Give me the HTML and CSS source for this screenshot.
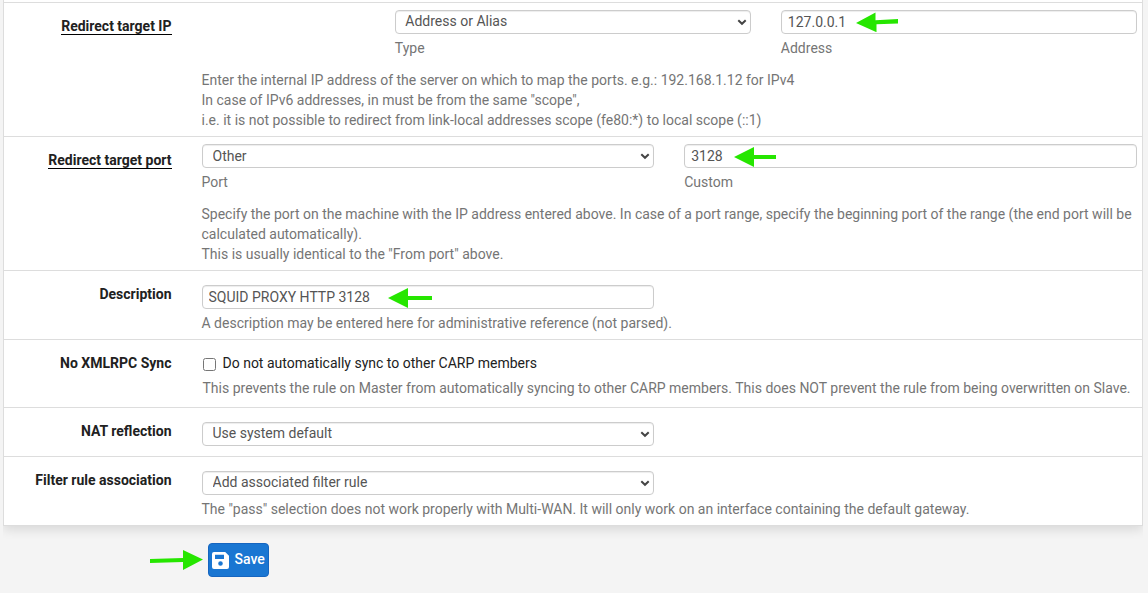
FILE: index.html
```html
<!DOCTYPE html>
<html lang="en">
<head>
<meta charset="utf-8">
<title>Port Forward</title>
<link rel="stylesheet" href="styles.css">
</head>
<body>
<form class="panel">
  <div class="row row-tall">
    <div class="label"><span class="required">Redirect target IP</span></div>
    <div class="content">
      <div class="fields fields-offset">
        <div class="field">
          <div class="select-wrap"><select class="control select"><option>Address or Alias</option></select><svg class="chevron" viewBox="0 0 10 7"><path d="M1.3 1.2 5 4.8 8.7 1.2"/></svg></div>
          <div class="help">Type</div>
        </div>
        <div class="field">
          <input class="control" type="text" value="127.0.0.1">
          <svg class="arrow arrow-address" viewBox="0 0 44 20"><path d="M2 11 21.5 .5v7.7L44 7v4.4l-21.5.8v8z"/></svg>
          <div class="help">Address</div>
        </div>
      </div>
      <div class="help notes">Enter the internal IP address of the server on which to map the ports. e.g.: 192.168.1.12 for IPv4<br>In case of IPv6 addresses, in must be from the same "scope",<br>i.e. it is not possible to redirect from link-local addresses scope (fe80:*) to local scope (::1)</div>
    </div>
  </div>
  <div class="row row-tall">
    <div class="label"><span class="required">Redirect target port</span></div>
    <div class="content">
      <div class="fields">
        <div class="field">
          <div class="select-wrap"><select class="control select select-centered"><option>Other</option></select><svg class="chevron" viewBox="0 0 10 7"><path d="M1.3 1.2 5 4.8 8.7 1.2"/></svg></div>
          <div class="help">Port</div>
        </div>
        <div class="field">
          <input class="control" type="text" value="3128">
          <svg class="arrow arrow-port" viewBox="0 0 42 20"><path d="M0 10 20 0v8h22v4H20v8z"/></svg>
          <div class="help">Custom</div>
        </div>
      </div>
      <div class="help notes">Specify the port on the machine with the IP address entered above. In case of a port range, specify the beginning port of the range (the end port will be calculated automatically).<br>This is usually identical to the "From port" above.</div>
    </div>
  </div>
  <div class="row">
    <div class="label">Description</div>
    <div class="content">
      <div class="fields">
        <div class="field">
          <input class="control" type="text" value="SQUID PROXY HTTP 3128">
          <svg class="arrow arrow-description" viewBox="0 0 44 20"><path d="M0 10 20 0v8h24v4H20v8z"/></svg>
        </div>
      </div>
      <div class="help">A description may be entered here for administrative reference (not parsed).</div>
    </div>
  </div>
  <div class="row row-check">
    <div class="label">No XMLRPC Sync</div>
    <div class="content">
      <label class="check"><input class="checkbox" type="checkbox">Do not automatically sync to other CARP members</label>
      <div class="help">This prevents the rule on Master from automatically syncing to other CARP members. This does NOT prevent the rule from being overwritten on Slave.</div>
    </div>
  </div>
  <div class="row row-plain">
    <div class="label">NAT reflection</div>
    <div class="content">
      <div class="fields">
        <div class="select-wrap"><select class="control select"><option>Use system default</option></select><svg class="chevron" viewBox="0 0 10 7"><path d="M1.3 1.2 5 4.8 8.7 1.2"/></svg></div>
      </div>
    </div>
  </div>
  <div class="row">
    <div class="label">Filter rule association</div>
    <div class="content">
      <div class="fields">
        <div class="select-wrap"><select class="control select"><option>Add associated filter rule</option></select><svg class="chevron" viewBox="0 0 10 7"><path d="M1.3 1.2 5 4.8 8.7 1.2"/></svg></div>
      </div>
      <div class="help">The "pass" selection does not work properly with Multi-WAN. It will only work on an interface containing the default gateway.</div>
    </div>
  </div>
</form>
<div class="actions">
  <svg class="save-arrow" viewBox="0 0 53 20"><path d="M0 9 33 8V0l20 9.500-20 10.500v-8L0 13z"/></svg>
  <button class="save" type="button">
    <svg class="save-icon" viewBox="0 0 17 17"><path fill-rule="evenodd" d="M2 0h11.200L17 3.800V15a2 2 0 0 1-2 2H2a2 2 0 0 1-2-2V2a2 2 0 0 1 2-2zM3 2.800V7h9V2.800zM8.500 9.200a2.300 2.300 0 1 0 0 4.600 2.300 2.300 0 0 0 0-4.600z"/></svg>
    <span class="save-text">Save</span>
  </button>
</div>
</body>
</html>
```
FILE: styles.css
```css
* { box-sizing: border-box; }

body {
  margin: 0;
  height: 593px;
  overflow: hidden;
  background: #f4f4f4;
  color: #212121;
  font: 14px/20px Roboto, sans-serif;
}

.panel {
  margin: 0 5px 0 3px;
  padding-top: 2px;
  height: 526px;
  background: #fff;
  border: 1px solid #ddd;
  border-top: 0;
  box-shadow: 0 4px 10px rgba(0, 0, 0, .11);
  clip-path: inset(0 0 -20px 0);
}

.row {
  display: grid;
  grid-template-columns: 167.5px 935.4px;
  column-gap: 30px;
  padding-bottom: 6px;
  border-top: 1px solid #ddd;
}

.label {
  padding-top: 13px;
  text-align: right;
  font-weight: 700;
  white-space: nowrap;
}

.required {
  display: inline-block;
  height: 19px;
  border-bottom: 1px solid #000;
}

.content { padding-top: 14px; }
.row-tall .content { padding-top: 7px; }
.row-plain { padding-bottom: 10px; }

.fields {
  display: grid;
  grid-template-columns: 1fr 1fr;
  column-gap: 30px;
}

.fields-offset { padding-left: 193.3px; }
.field, .select-wrap { position: relative; }

.control {
  display: block;
  width: 100%;
  height: 24px;
  margin: 0;
  padding: 0 6px;
  border: 1px solid #ccc;
  border-radius: 4px;
  background: #fff;
  box-shadow: inset 0 1px 1px rgba(0, 0, 0, .075);
  color: #555;
  font: inherit;
}

.select {
  appearance: none;
  padding: 0 24px 2px 10px;
}

.fields-offset .select { padding-left: 9.500px; }
.select-centered { padding-bottom: 0; }

.chevron {
  position: absolute;
  top: 9px;
  right: 4px;
  width: 10px;
  height: 7px;
  fill: none;
  stroke: #444;
  stroke-width: 2;
}

.help {
  padding-top: 4px;
  color: #757575;
}

.notes { padding-top: 12px; }

.check {
  display: flex;
  align-items: center;
}

.row-check .content { padding: 13px 0 3px 1px; }

.checkbox {
  width: 13px;
  height: 13px;
  margin: 2px 7px 0 0;
}

.row-check .help { padding-top: 5px; white-space: nowrap; }

.arrow {
  position: absolute;
  height: 20px;
  fill: #26e600;
}

.arrow-address { left: 73px; top: 2px; width: 44px; }
.arrow-port { left: 50px; top: 3px; width: 42px; }
.arrow-description { left: 186.500px; top: 3px; width: 44px; }

.actions {
  display: flex;
  align-items: center;
  gap: 5px;
  padding: 17px 0 0 150px;
}

.save-arrow {
  width: 53px;
  height: 20px;
  fill: #26e600;
}

.save {
  display: flex;
  align-items: center;
  gap: 5.500px;
  width: 61px;
  height: 34px;
  padding: 0 3px;
  border: 1px solid #1565c0;
  border-radius: 4px;
  background: #1976d2;
  color: #fff;
  font: 500 14px/20px Roboto, sans-serif;
}

.save-text { padding-bottom: 2px; }

.save-icon {
  flex: none;
  width: 17px;
  height: 17px;
  fill: #fff;
}
```
